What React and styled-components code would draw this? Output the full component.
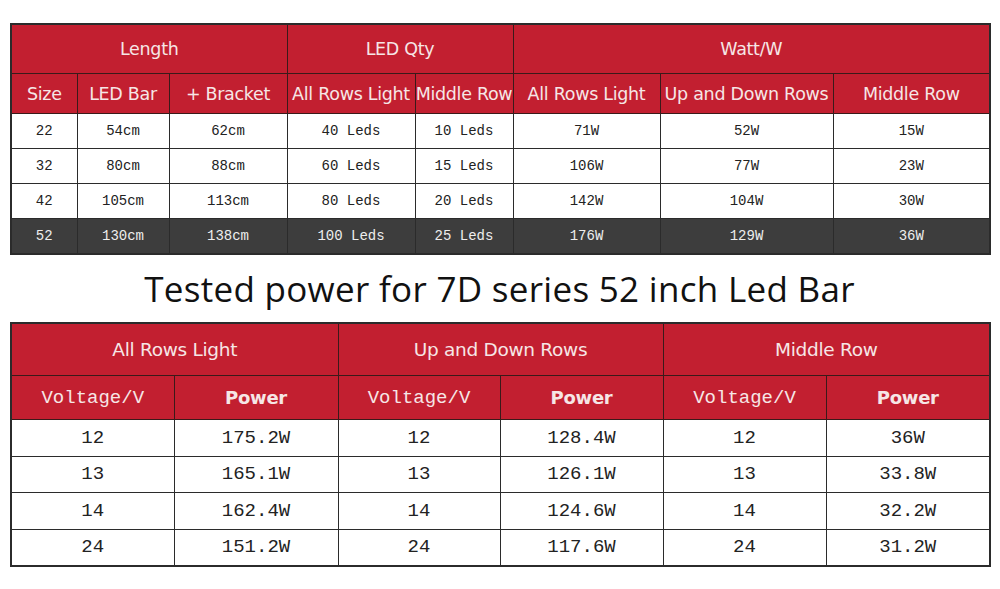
import React from 'react'
import styled, { createGlobalStyle } from 'styled-components'

const Global = createGlobalStyle`
  body {
    margin: 0;
    background: #fff;
    font-family: "DejaVu Sans", sans-serif;
  }
`;

const Page = styled.div`
  width: 1000px;
  padding: 23px 0 0 10px;
  box-sizing: border-box;
`;

const Table = styled.table`
  width: 979px;
  border-collapse: collapse;
  table-layout: fixed;
  border: 2px solid #2b2b2b;
`;

const Head = styled.th`
  background: #c21f30;
  color: #f6e6e6;
  font-weight: normal;
  font-family: "DejaVu Sans", sans-serif;
  font-size: ${p => p.size || 17.5}px;
  height: ${p => p.h}px;
  padding: 0;
  border: 1px solid #3a1a1a;
  white-space: nowrap;
  letter-spacing: -0.3px;
`;

const SubHead = styled(Head)`
  font-family: ${p => p.mono ? '"Liberation Mono", monospace' : '"DejaVu Sans", sans-serif'};
  font-weight: ${p => p.bold ? 'bold' : 'normal'};
  letter-spacing: ${p => p.mono ? '0' : '-0.3px'};
`;

const Row = styled.tr`
  background: ${p => p.dark ? '#3d3d3d' : '#fff'};
  color: ${p => p.dark ? '#eee' : '#222'};
`;

const Cell = styled.td`
  font-family: "Liberation Mono", monospace;
  font-size: ${p => p.size || 14}px;
  height: ${p => p.h}px;
  padding: 0;
  text-align: center;
  border: 1px solid #2b2b2b;
`;

const Title = styled.h1`
  margin: 0;
  width: 979px;
  height: 67px;
  display: flex;
  align-items: center;
  justify-content: center;
  font-family: "Open Sans", sans-serif;
  font-weight: 500;
  font-size: 35px;
  color: #111;
  letter-spacing: 0.3px;
`;

const sizes = [
  ['22', '54cm', '62cm', '40 Leds', '10 Leds', '71W', '52W', '15W'],
  ['32', '80cm', '88cm', '60 Leds', '15 Leds', '106W', '77W', '23W'],
  ['42', '105cm', '113cm', '80 Leds', '20 Leds', '142W', '104W', '30W'],
  ['52', '130cm', '138cm', '100 Leds', '25 Leds', '176W', '129W', '36W'],
];

const tested = [
  ['12', '175.2W', '12', '128.4W', '12', '36W'],
  ['13', '165.1W', '13', '126.1W', '13', '33.8W'],
  ['14', '162.4W', '14', '124.6W', '14', '32.2W'],
  ['24', '151.2W', '24', '117.6W', '24', '31.2W'],
];

const subHeads = ['Size', 'LED Bar', '+ Bracket', 'All Rows Light', 'Middle Row', 'All Rows Light', 'Up and Down Rows', 'Middle Row'];

const widths1 = [66, 92, 118, 128, 98, 147, 173, 157];
const widths2 = [163, 164, 162, 163, 163, 164];

const App = () => {
  return (
    <Page>
      <Global />
      <Table>
        <colgroup>
          {widths1.map((w, i) => <col key={i} style={{ width: w }} />)}
        </colgroup>
        <thead>
          <tr>
            <Head colSpan={3} h={48}>Length</Head>
            <Head colSpan={2} h={48}>LED Qty</Head>
            <Head colSpan={3} h={48}>Watt/W</Head>
          </tr>
          <tr>
            {subHeads.map((t, i) => (
              <SubHead key={i} h={39}>{t}</SubHead>
            ))}
          </tr>
        </thead>
        <tbody>
          {sizes.map((r, i) => (
            <Row key={i} dark={i === 3}>
              {r.map((c, j) => <Cell key={j} h={34}>{c}</Cell>)}
            </Row>
          ))}
        </tbody>
      </Table>
      <Title>Tested power for 7D series 52 inch Led Bar</Title>
      <Table>
        <colgroup>
          {widths2.map((w, i) => <col key={i} style={{ width: w }} />)}
        </colgroup>
        <thead>
          <tr>
            <Head colSpan={2} h={51} size={18.5}>All Rows Light</Head>
            <Head colSpan={2} h={51} size={18.5}>Up and Down Rows</Head>
            <Head colSpan={2} h={51} size={18.5}>Middle Row</Head>
          </tr>
          <tr>
            {[0, 1, 2].map(k => (
              <React.Fragment key={k}>
                <SubHead mono h={43} size={19}>Voltage/V</SubHead>
                <SubHead bold h={43} size={18}>Power</SubHead>
              </React.Fragment>
            ))}
          </tr>
        </thead>
        <tbody>
          {tested.map((r, i) => (
            <Row key={i}>
              {r.map((c, j) => <Cell key={j} h={35.5} size={19}>{c}</Cell>)}
            </Row>
          ))}
        </tbody>
      </Table>
    </Page>
  )
}

export default App
